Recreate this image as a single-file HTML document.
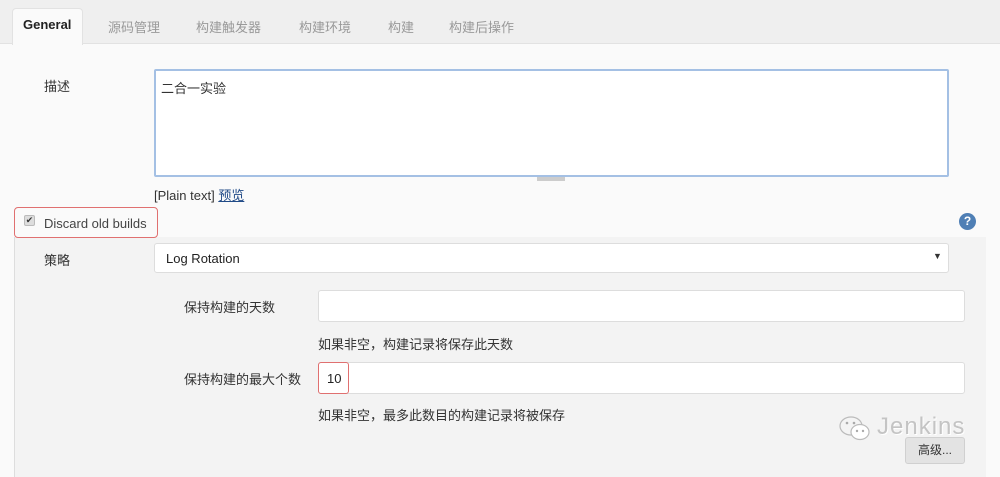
<!DOCTYPE html>
<html><head><meta charset="utf-8"><style>
*{box-sizing:border-box;margin:0;padding:0}
body{width:1000px;height:470px;overflow:hidden;background:#fafafa;font-family:"Liberation Sans","Noto Sans CJK SC",sans-serif;font-size:13px;color:#333;position:relative}
.a{position:absolute}
.tabs{left:0;top:0;width:1000px;height:44px;background:#efefef;border-bottom:1px solid #e2e2e2}
.tab{top:15px;color:#999;font-size:13px}
.inp{background:#fff;border:1px solid #ddd;border-radius:3px}
.lbl{color:#333;font-size:13px}
</style></head><body>
<div class="a tabs"></div>
<div class="a" style="left:12px;top:8px;width:71px;height:37px;background:#fafafa;border:1px solid #e2e2e2;border-bottom:none;border-radius:4px 4px 0 0"></div>
<div class="a" style="left:23px;top:17px;font-weight:bold;color:#222;font-size:13px">General</div>
<div class="a tab" style="left:108px;top:17px">源码管理</div>
<div class="a tab" style="left:196px;top:17px">构建触发器</div>
<div class="a tab" style="left:299px;top:17px">构建环境</div>
<div class="a tab" style="left:388px;top:17px">构建</div>
<div class="a tab" style="left:449px;top:17px">构建后操作</div>

<div class="a lbl" style="left:44px;top:76px">描述</div>
<div class="a" style="left:154px;top:69px;width:795px;height:108px;background:#fff;border:2px solid #a4c0e4;border-radius:2px"></div>
<div class="a" style="left:161px;top:78px;font-size:13px">二合一实验</div>
<div class="a" style="left:537px;top:177px;width:28px;height:4px;background:#ccc"></div>
<div class="a" style="left:154px;top:185px;color:#333">[Plain text] <span style="color:#204a87;text-decoration:underline">预览</span></div>

<div class="a" style="left:14px;top:237px;width:972px;height:240px;background:#f3f3f3;border-left:1px solid #ddd"></div>
<div class="a" style="left:14px;top:207px;width:144px;height:31px;border:1px solid #e07070;border-radius:4px;background:#fafafa"></div>
<div class="a" style="left:24px;top:215px;width:11px;height:11px;background:#ddd;border:1px solid #bbb;border-radius:2px;font-size:9px;line-height:9px;text-align:center">✔</div>
<div class="a" style="left:44px;top:216px;color:#444">Discard old builds</div>
<div class="a" style="left:959px;top:213px;width:17px;height:17px;border-radius:50%;background:#4f7fb5;color:#fff;font-weight:bold;font-size:12px;text-align:center;line-height:17px">?</div>

<div class="a lbl" style="left:44px;top:250px">策略</div>
<div class="a inp" style="left:154px;top:243px;width:795px;height:30px"></div>
<div class="a" style="left:166px;top:251px;color:#222">Log Rotation</div>
<div class="a" style="left:933px;top:251px;font-size:9px">▼</div>

<div class="a lbl" style="left:184px;top:297px">保持构建的天数</div>
<div class="a inp" style="left:318px;top:290px;width:647px;height:32px"></div>
<div class="a" style="left:318px;top:334px">如果非空，构建记录将保存此天数</div>
<div class="a lbl" style="left:184px;top:369px">保持构建的最大个数</div>
<div class="a inp" style="left:318px;top:362px;width:647px;height:32px"></div>
<div class="a" style="left:318px;top:362px;width:31px;height:32px;border:1px solid #e07070;border-radius:3px"></div>
<div class="a" style="left:327px;top:371px;color:#222">10</div>
<div class="a" style="left:318px;top:405px">如果非空，最多此数目的构建记录将被保存</div>

<div class="a" style="left:905px;top:437px;width:60px;height:27px;background:#e3e3e3;border:1px solid #d0d0d0;border-radius:3px;text-align:center;line-height:25px;font-size:12px">高级...</div>
<svg class="a" style="left:838px;top:415px" width="36" height="28" viewBox="0 0 36 28">
<ellipse cx="13" cy="11" rx="11" ry="9" fill="#f4f4f4" stroke="#bbb" stroke-width="1.2"/>
<ellipse cx="22" cy="17" rx="9" ry="7.5" fill="#fff" stroke="#bbb" stroke-width="1.2"/>
<circle cx="9" cy="8" r="1.3" fill="#aaa"/><circle cx="16" cy="8" r="1.3" fill="#aaa"/>
<circle cx="19" cy="16" r="1.2" fill="#aaa"/><circle cx="25" cy="16" r="1.2" fill="#aaa"/>
</svg>
<div class="a" style="left:877px;top:413px;font-size:24px;color:#c4c4c4;letter-spacing:1px;text-shadow:1px 1px 0 #fff">Jenkins</div>
</body></html>
